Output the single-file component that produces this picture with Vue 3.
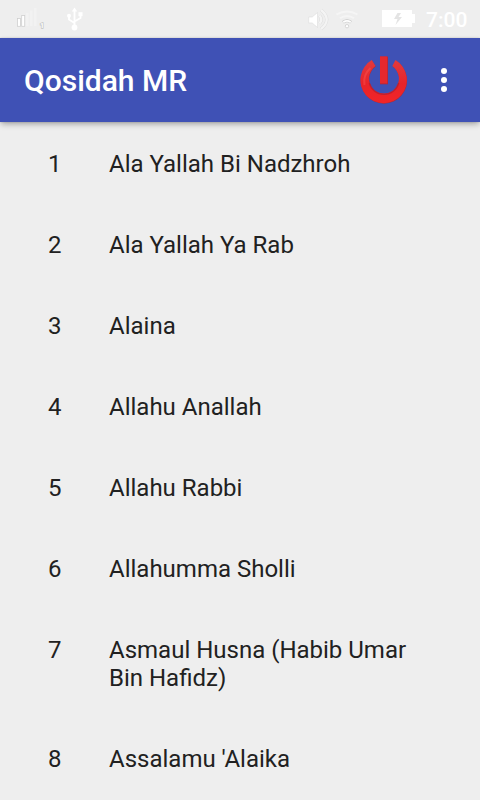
<template>
  <div class="screen">
    <header class="status-bar">
      <svg class="status-left" width="100" height="38" viewBox="0 0 100 38">
        <g fill="#f2f2f2">
          <rect x="26" y="13" width="2.600" height="13" />
          <rect x="30" y="10.500" width="2.600" height="15.500" />
          <rect x="34" y="8" width="2.600" height="18" />
        </g>
        <g fill="#fff" stroke="#cfcfcf" stroke-width="0.8">
          <rect x="17.500" y="18.500" width="3" height="7.800" />
          <rect x="21.700" y="15.500" width="3" height="10.800" />
        </g>
        <text x="40" y="28" class="sim">1</text>
        <g fill="none" stroke="#fff" stroke-width="1.800">
          <path d="M74.500 10v16M69 16v3.500l5.500 3.500M80.500 14.500v3.500l-6 3.500" />
        </g>
        <g fill="#fff">
          <path d="M74.500 7.500l2.700 4h-5.400z" />
          <circle cx="74.500" cy="27.500" r="2.900" />
          <circle cx="69" cy="15.800" r="2" />
          <rect x="78.500" y="12.200" width="4" height="4" />
        </g>
      </svg>
      <div class="status-right">
        <svg width="116" height="38" viewBox="0 0 116 38">
          <g fill="none" stroke="#dcdcdc" stroke-width="3.200">
            <path d="M19.500 15.500q3.500 4 0 8M21 10q11.500 9.500 0 19" />
          </g>
          <g fill="none" stroke="#f4f4f4" stroke-width="2.300">
            <path d="M19.500 15.500q3.500 4 0 8M21 10q11.500 9.500 0 19" />
          </g>
          <path d="M8.700 17h3.500l5.300-4.500v15L12.200 23H8.700z" fill="#fff" stroke="#dcdcdc" stroke-width="0.6" />
          <path d="M36.500 14.500q10.500-6 21 0M40 18.300q7-4.800 14 0" fill="none" stroke="#f5f5f5" stroke-width="2" />
          <path d="M43 22.300q4-3 8 0" fill="none" stroke="#c8c8c8" stroke-width="3" />
          <path d="M43.300 22.200q3.700-2.600 7.400 0" fill="none" stroke="#fff" stroke-width="1.700" />
          <circle cx="47" cy="26.200" r="1.700" fill="#fff" stroke="#c8c8c8" stroke-width="0.7" />
          <path d="M82 10h30v4h3v9h-3v4H82z" fill="#fff" />
          <path d="M97.500 13l-3.500 6h3.500l-2 6 6.500-8h-3.500l2.500-4z" fill="#e4e4e4" />
        </svg>
        <span class="clock">7:00</span>
      </div>
    </header>

    <div class="toolbar">
      <h1>Qosidah MR</h1>
      <button class="power" aria-label="Exit">
        <svg width="48" height="48" viewBox="0 0 48 48">
          <defs>
            <linearGradient id="red" x1="0" y1="0" x2="0" y2="1">
              <stop offset="0" stop-color="#e23a3e" />
              <stop offset="0.55" stop-color="#e8242a" />
              <stop offset="1" stop-color="#f32427" />
            </linearGradient>
          </defs>
          <path :d="ring" fill="#a82a3d" />
          <path :d="ring" fill="url(#red)" transform="translate(-0.300 -0.500)" />
          <path d="M9.300 27a15.200 15.200 0 0 0 29.400 0" fill="none" stroke="#b51f30" stroke-width="1.300" opacity="0.8" />
          <path d="M10.500 12a18.500 18.500 0 0 0-6 17" fill="none" stroke="#ff5a55" stroke-width="2" opacity="0.4" />
          <rect x="20" y="0.700" width="8" height="27.600" fill="#b3273a" />
          <rect x="20" y="0.400" width="7.200" height="27" fill="#e5282e" />
        </svg>
      </button>
      <button class="more" aria-label="More options">
        <i></i><i></i><i></i>
      </button>
    </div>

    <ol class="list">
      <li v-for="(title, index) in songs" :key="title">
        <span class="number">{{ index + 1 }}</span>
        <span class="title">{{ title }}</span>
      </li>
    </ol>
  </div>
</template>

<script setup>
const songs = [
  'Ala Yallah Bi Nadzhroh',
  'Ala Yallah Ya Rab',
  'Alaina',
  'Allahu Anallah',
  'Allahu Rabbi',
  'Allahumma Sholli',
  'Asmaul Husna (Habib Umar Bin Hafidz)',
  "Assalamu 'Alaika"
]

const ring = 'M12 4.600L15.800 10.600A15 15 0 1 0 32.600 10.600L35.800 4.600A23.200 23.200 0 1 1 12 4.600z'
</script>

<style>
body {
  margin: 0;
  background: #eee;
}
</style>

<style scoped>
.screen {
  height: 800px;
  overflow: hidden;
  background: #eee;
  color: #212121;
  font-family: Roboto, "Liberation Sans", sans-serif;
}
.status-bar {
  display: flex;
  justify-content: space-between;
  height: 38px;
}
.status-right {
  display: flex;
  padding-right: 12px;
}
.sim {
  fill: #fff;
  stroke: #c4c4c4;
  stroke-width: 1.4px;
  paint-order: stroke;
  font-size: 7px;
  font-weight: 700;
}
.clock {
  width: 42px;
  margin-left: 10px;
  color: #fff;
  font-size: 21px;
  font-weight: 500;
  line-height: 40px;
}
.toolbar {
  position: relative;
  display: flex;
  align-items: center;
  height: 84px;
  padding-left: 24px;
  background: #3f51b5;
  box-shadow: 0 3px 6px -1px rgba(0, 0, 0, 0.32), 0 0 2px rgba(0, 0, 0, 0.15);
}
h1 {
  flex: 1;
  margin: 0;
  padding-top: 2px;
  color: #fff;
  font-size: 30px;
  font-weight: 500;
  line-height: 36px;
}
button {
  padding: 0;
  border: 0;
  background: none;
}
.power {
  width: 48px;
  height: 48px;
}
.power svg {
  display: block;
}
.more {
  display: flex;
  flex-direction: column;
  align-items: center;
  gap: 3px;
  width: 72px;
}
.more i {
  width: 6px;
  height: 6px;
  border-radius: 50%;
  background: #fff;
}
.list {
  margin: 0;
  padding: 0;
  list-style: none;
}
.list li {
  display: flex;
  padding: 28px 48px 25px;
  font-size: 24px;
  line-height: 28px;
}
.number {
  flex: none;
  width: 61px;
}
</style>
